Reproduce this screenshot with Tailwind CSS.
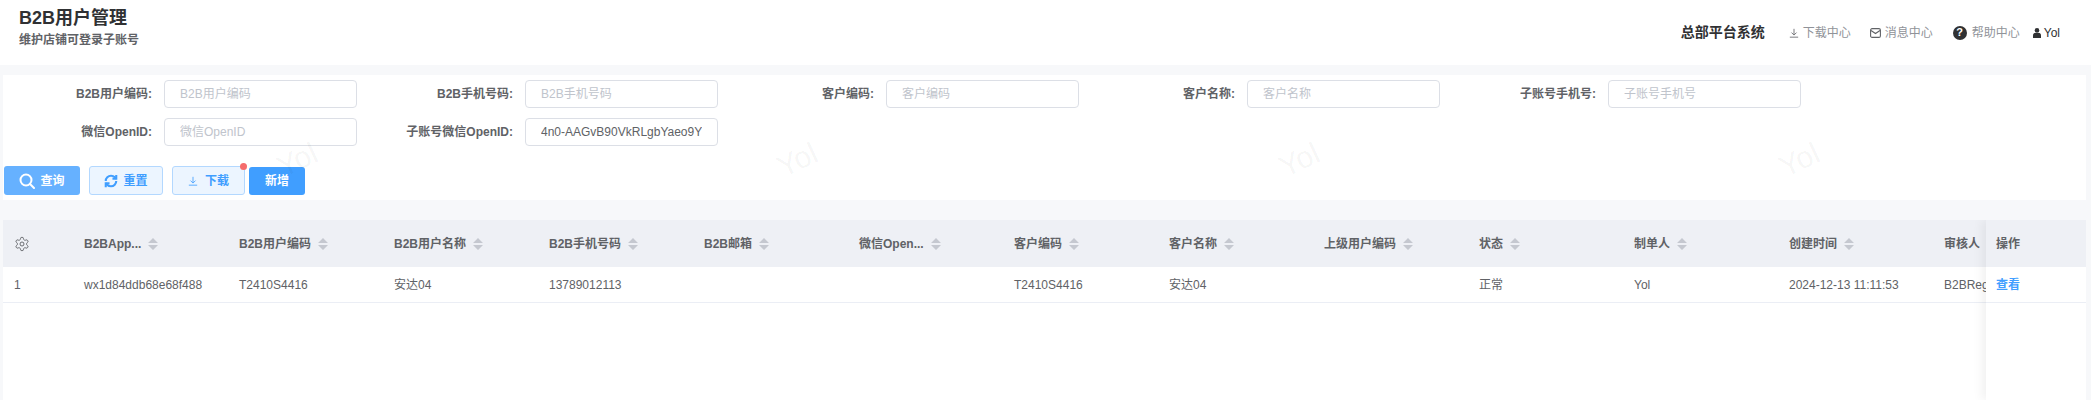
<!DOCTYPE html>
<html lang="zh-CN">
<head>
  <meta charset="UTF-8" />
  <title>B2B用户管理</title>
  <script src="https://cdn.jsdelivr.net/npm/@tailwindcss/browser@4"></script>
</head>
<body class="bg-[#f7f8fa] text-[#606266] text-[12px] font-['Liberation_Sans','Noto_Sans_CJK_SC',sans-serif]">
  <svg class="hidden">
    <symbol id="sort" viewBox="0 0 10 12"><path d="M5 0l5 5H0zM0 7h10l-5 5z" fill="#c5c8d0" /></symbol>
    <symbol id="dl" viewBox="0 0 12 12"><path d="M6 1v7M3 5.5L6 8.5l3-3M1 11h10" fill="none" stroke="currentColor" stroke-width="1" /></symbol>
  </svg>

  <div class="relative h-[400px] w-[2091px] overflow-hidden">
    <!-- 顶部 -->
    <header class="flex h-[65px] items-start justify-between bg-white pl-[19px] pr-[31px]">
      <div class="pt-[5px]">
        <h1 class="text-[18px] leading-[26px] font-bold text-[#303133]">B2B用户管理</h1>
        <p class="text-[12px] leading-[18px] font-semibold text-[#606266]">维护店铺可登录子账号</p>
      </div>
      <div class="flex h-[65px] items-center text-[#909399]">
        <span class="mr-[24px] text-[14px] font-bold text-[#303133]">总部平台系统</span>
        <svg class="mr-[4px] h-[10px] w-[10px] text-[#606266]"><use href="#dl" /></svg>
        <span class="mr-[19px]">下载中心</span>
        <svg class="mr-[4px] h-[10px] w-[11px]" viewBox="0 0 11 10"><rect x=".6" y=".6" width="9.8" height="8.8" rx="1.5" fill="none" stroke="#606266" stroke-width="1.1" /><path d="M1 2.5l4.5 3 4.5-3" fill="none" stroke="#606266" stroke-width="1.1" /></svg>
        <span class="mr-[20px]">消息中心</span>
        <span class="mr-[5px] flex h-[14px] w-[14px] items-center justify-center rounded-full bg-[#303133] text-[11px] leading-none font-bold text-white">?</span>
        <span class="mr-[13px]">帮助中心</span>
        <svg class="mr-[3px] h-[10px] w-[8px]" viewBox="0 0 8 10"><circle cx="4" cy="2.4" r="2.3" fill="#303133" /><path d="M0 10V7.2C0 5.6 1.2 5 2.2 5h3.6C6.8 5 8 5.6 8 7.2V10z" fill="#303133" /></svg>
        <span class="text-[#303133]">Yol</span>
      </div>
    </header>

    <!-- 筛选 -->
    <section class="mt-[10px] ml-[3px] h-[125px] w-[2083px] bg-white pt-[5px]">
      <div class="grid grid-cols-[repeat(5,361px)] gap-y-[10px] font-bold">
        <label class="flex items-center gap-[12px]"><span class="w-[149px] text-right">B2B用户编码:</span><input placeholder="B2B用户编码" class="h-[28px] w-[193px] rounded-[4px] border border-[#dcdfe6] px-[15px] font-normal outline-none placeholder:text-[#c0c4cc]" /></label>
        <label class="flex items-center gap-[12px]"><span class="w-[149px] text-right">B2B手机号码:</span><input placeholder="B2B手机号码" class="h-[28px] w-[193px] rounded-[4px] border border-[#dcdfe6] px-[15px] font-normal outline-none placeholder:text-[#c0c4cc]" /></label>
        <label class="flex items-center gap-[12px]"><span class="w-[149px] text-right">客户编码:</span><input placeholder="客户编码" class="h-[28px] w-[193px] rounded-[4px] border border-[#dcdfe6] px-[15px] font-normal outline-none placeholder:text-[#c0c4cc]" /></label>
        <label class="flex items-center gap-[12px]"><span class="w-[149px] text-right">客户名称:</span><input placeholder="客户名称" class="h-[28px] w-[193px] rounded-[4px] border border-[#dcdfe6] px-[15px] font-normal outline-none placeholder:text-[#c0c4cc]" /></label>
        <label class="flex items-center gap-[12px]"><span class="w-[149px] text-right">子账号手机号:</span><input placeholder="子账号手机号" class="h-[28px] w-[193px] rounded-[4px] border border-[#dcdfe6] px-[15px] font-normal outline-none placeholder:text-[#c0c4cc]" /></label>
        <label class="flex items-center gap-[12px]"><span class="w-[149px] text-right">微信OpenID:</span><input placeholder="微信OpenID" class="h-[28px] w-[193px] rounded-[4px] border border-[#dcdfe6] px-[15px] font-normal outline-none placeholder:text-[#c0c4cc]" /></label>
        <label class="flex items-center gap-[12px]"><span class="w-[149px] text-right">子账号微信OpenID:</span><input value="4n0-AAGvB90VkRLgbYaeo9Y" class="h-[28px] w-[193px] rounded-[4px] border border-[#dcdfe6] px-[15px] font-normal outline-none" /></label>
      </div>

      <div class="mt-[20px] ml-[1px] flex items-end font-bold">
        <button class="flex h-[29px] w-[76px] items-center justify-center gap-[5px] rounded-[3px] bg-[#66b1ff] text-white">
          <svg class="h-[16px] w-[16px]" viewBox="0 0 16 16" fill="none" stroke="#fff" stroke-width="2"><circle cx="7" cy="7" r="5.5" /><path d="M11 11l4 4" stroke-linecap="round" /></svg>
          查询
        </button>
        <button class="ml-[9px] flex h-[29px] w-[74px] items-center justify-center gap-[5px] rounded-[3px] border border-[#b3d8ff] bg-[#ecf5ff] text-[#409eff]">
          <svg class="h-[14px] w-[14px]" viewBox="0 0 24 24" fill="none" stroke="#409eff" stroke-width="3.6"><path d="M3 12a9 9 0 0 1 9-9 9.75 9.75 0 0 1 6.74 2.74L21 8" /><path d="M21 1.5V8h-6.5" /><path d="M21 12a9 9 0 0 1-9 9 9.75 9.75 0 0 1-6.74-2.74L3 16" /><path d="M9.5 16H3v6.5" /></svg>
          重置
        </button>
        <button class="relative ml-[9px] flex h-[29px] w-[73px] items-center justify-center gap-[7px] rounded-[3px] border border-[#b3d8ff] bg-[#ecf5ff] text-[#409eff]">
          <svg class="h-[10px] w-[10px]"><use href="#dl" /></svg>
          下载
          <span class="absolute top-[-4px] right-[-3px] h-[7px] w-[7px] rounded-full bg-[#f56c6c]"></span>
        </button>
        <button class="ml-[4px] h-[28px] w-[56px] rounded-[3px] bg-[#409eff] text-white">新增</button>
      </div>
    </section>

    <!-- 列表 -->
    <section class="relative mt-[20px] ml-[3px] h-[180px] w-[2083px] overflow-hidden bg-white">
      <div class="flex h-[47px] w-[2200px] items-center bg-[#eef0f5] font-bold whitespace-nowrap">
        <div class="w-[71px] pl-[11px]">
          <svg class="h-[16px] w-[16px]" viewBox="0 0 24 24" fill="none" stroke="#606266" stroke-width="1.4"><path d="M12.22 2h-.44a2 2 0 0 0-2 2v.18a2 2 0 0 1-1 1.73l-.43.25a2 2 0 0 1-2 0l-.15-.08a2 2 0 0 0-2.73.73l-.22.38a2 2 0 0 0 .73 2.73l.15.1a2 2 0 0 1 1 1.72v.51a2 2 0 0 1-1 1.74l-.15.09a2 2 0 0 0-.73 2.73l.22.38a2 2 0 0 0 2.73.73l.15-.08a2 2 0 0 1 2 0l.43.25a2 2 0 0 1 1 1.73V20a2 2 0 0 0 2 2h.44a2 2 0 0 0 2-2v-.18a2 2 0 0 1 1-1.73l.43-.25a2 2 0 0 1 2 0l.15.08a2 2 0 0 0 2.73-.73l.22-.39a2 2 0 0 0-.73-2.73l-.15-.08a2 2 0 0 1-1-1.74v-.5a2 2 0 0 1 1-1.74l.15-.09a2 2 0 0 0 .73-2.73l-.22-.38a2 2 0 0 0-2.73-.73l-.15.08a2 2 0 0 1-2 0l-.43-.25a2 2 0 0 1-1-1.73V4a2 2 0 0 0-2-2z" /><circle cx="12" cy="12" r="3" /></svg>
        </div>
        <div class="flex w-[155px] items-center gap-[7px] pl-[10px]">B2BApp...<svg class="h-[12px] w-[10px]"><use href="#sort" /></svg></div>
        <div class="flex w-[155px] items-center gap-[7px] pl-[10px]">B2B用户编码<svg class="h-[12px] w-[10px]"><use href="#sort" /></svg></div>
        <div class="flex w-[155px] items-center gap-[7px] pl-[10px]">B2B用户名称<svg class="h-[12px] w-[10px]"><use href="#sort" /></svg></div>
        <div class="flex w-[155px] items-center gap-[7px] pl-[10px]">B2B手机号码<svg class="h-[12px] w-[10px]"><use href="#sort" /></svg></div>
        <div class="flex w-[155px] items-center gap-[7px] pl-[10px]">B2B邮箱<svg class="h-[12px] w-[10px]"><use href="#sort" /></svg></div>
        <div class="flex w-[155px] items-center gap-[7px] pl-[10px]">微信Open...<svg class="h-[12px] w-[10px]"><use href="#sort" /></svg></div>
        <div class="flex w-[155px] items-center gap-[7px] pl-[10px]">客户编码<svg class="h-[12px] w-[10px]"><use href="#sort" /></svg></div>
        <div class="flex w-[155px] items-center gap-[7px] pl-[10px]">客户名称<svg class="h-[12px] w-[10px]"><use href="#sort" /></svg></div>
        <div class="flex w-[155px] items-center gap-[7px] pl-[10px]">上级用户编码<svg class="h-[12px] w-[10px]"><use href="#sort" /></svg></div>
        <div class="flex w-[155px] items-center gap-[7px] pl-[10px]">状态<svg class="h-[12px] w-[10px]"><use href="#sort" /></svg></div>
        <div class="flex w-[155px] items-center gap-[7px] pl-[10px]">制单人<svg class="h-[12px] w-[10px]"><use href="#sort" /></svg></div>
        <div class="flex w-[155px] items-center gap-[7px] pl-[10px]">创建时间<svg class="h-[12px] w-[10px]"><use href="#sort" /></svg></div>
        <div class="w-[52px] overflow-hidden pl-[10px]">审核人</div>
      </div>
      <div class="flex h-[36px] w-[2200px] items-center border-b border-[#ebeef5] whitespace-nowrap">
        <div class="w-[71px] pl-[11px]">1</div>
        <div class="w-[155px] pl-[10px]">wx1d84ddb68e68f488</div>
        <div class="w-[155px] pl-[10px]">T2410S4416</div>
        <div class="w-[155px] pl-[10px]">安达04</div>
        <div class="w-[155px] pl-[10px]">13789012113</div>
        <div class="w-[155px] pl-[10px]"></div>
        <div class="w-[155px] pl-[10px]"></div>
        <div class="w-[155px] pl-[10px]">T2410S4416</div>
        <div class="w-[155px] pl-[10px]">安达04</div>
        <div class="w-[155px] pl-[10px]"></div>
        <div class="w-[155px] pl-[10px]">正常</div>
        <div class="w-[155px] pl-[10px]">Yol</div>
        <div class="w-[155px] pl-[10px]">2024-12-13 11:11:53</div>
        <div class="w-[52px] overflow-hidden pl-[10px]">B2BRegister</div>
      </div>

      <!-- 固定操作列 -->
      <div class="absolute top-0 right-0 bottom-0 w-[100px] bg-white shadow-[-4px_0_10px_rgba(0,0,0,0.06)]">
        <div class="flex h-[47px] items-center bg-[#eef0f5] pl-[10px] font-bold">操作</div>
        <div class="flex h-[36px] items-center border-b border-[#ebeef5] pl-[10px] font-bold text-[#409eff]">查看</div>
      </div>
    </section>

    <!-- 水印 -->
    <span class="pointer-events-none absolute top-[140px] left-[277px] -rotate-[25deg] text-[30px] leading-[40px] text-black/5">Yol</span>
    <span class="pointer-events-none absolute top-[140px] left-[777px] -rotate-[25deg] text-[30px] leading-[40px] text-black/5">Yol</span>
    <span class="pointer-events-none absolute top-[140px] left-[1279px] -rotate-[25deg] text-[30px] leading-[40px] text-black/5">Yol</span>
    <span class="pointer-events-none absolute top-[140px] left-[1779px] -rotate-[25deg] text-[30px] leading-[40px] text-black/5">Yol</span>
  </div>
</body>
</html>
